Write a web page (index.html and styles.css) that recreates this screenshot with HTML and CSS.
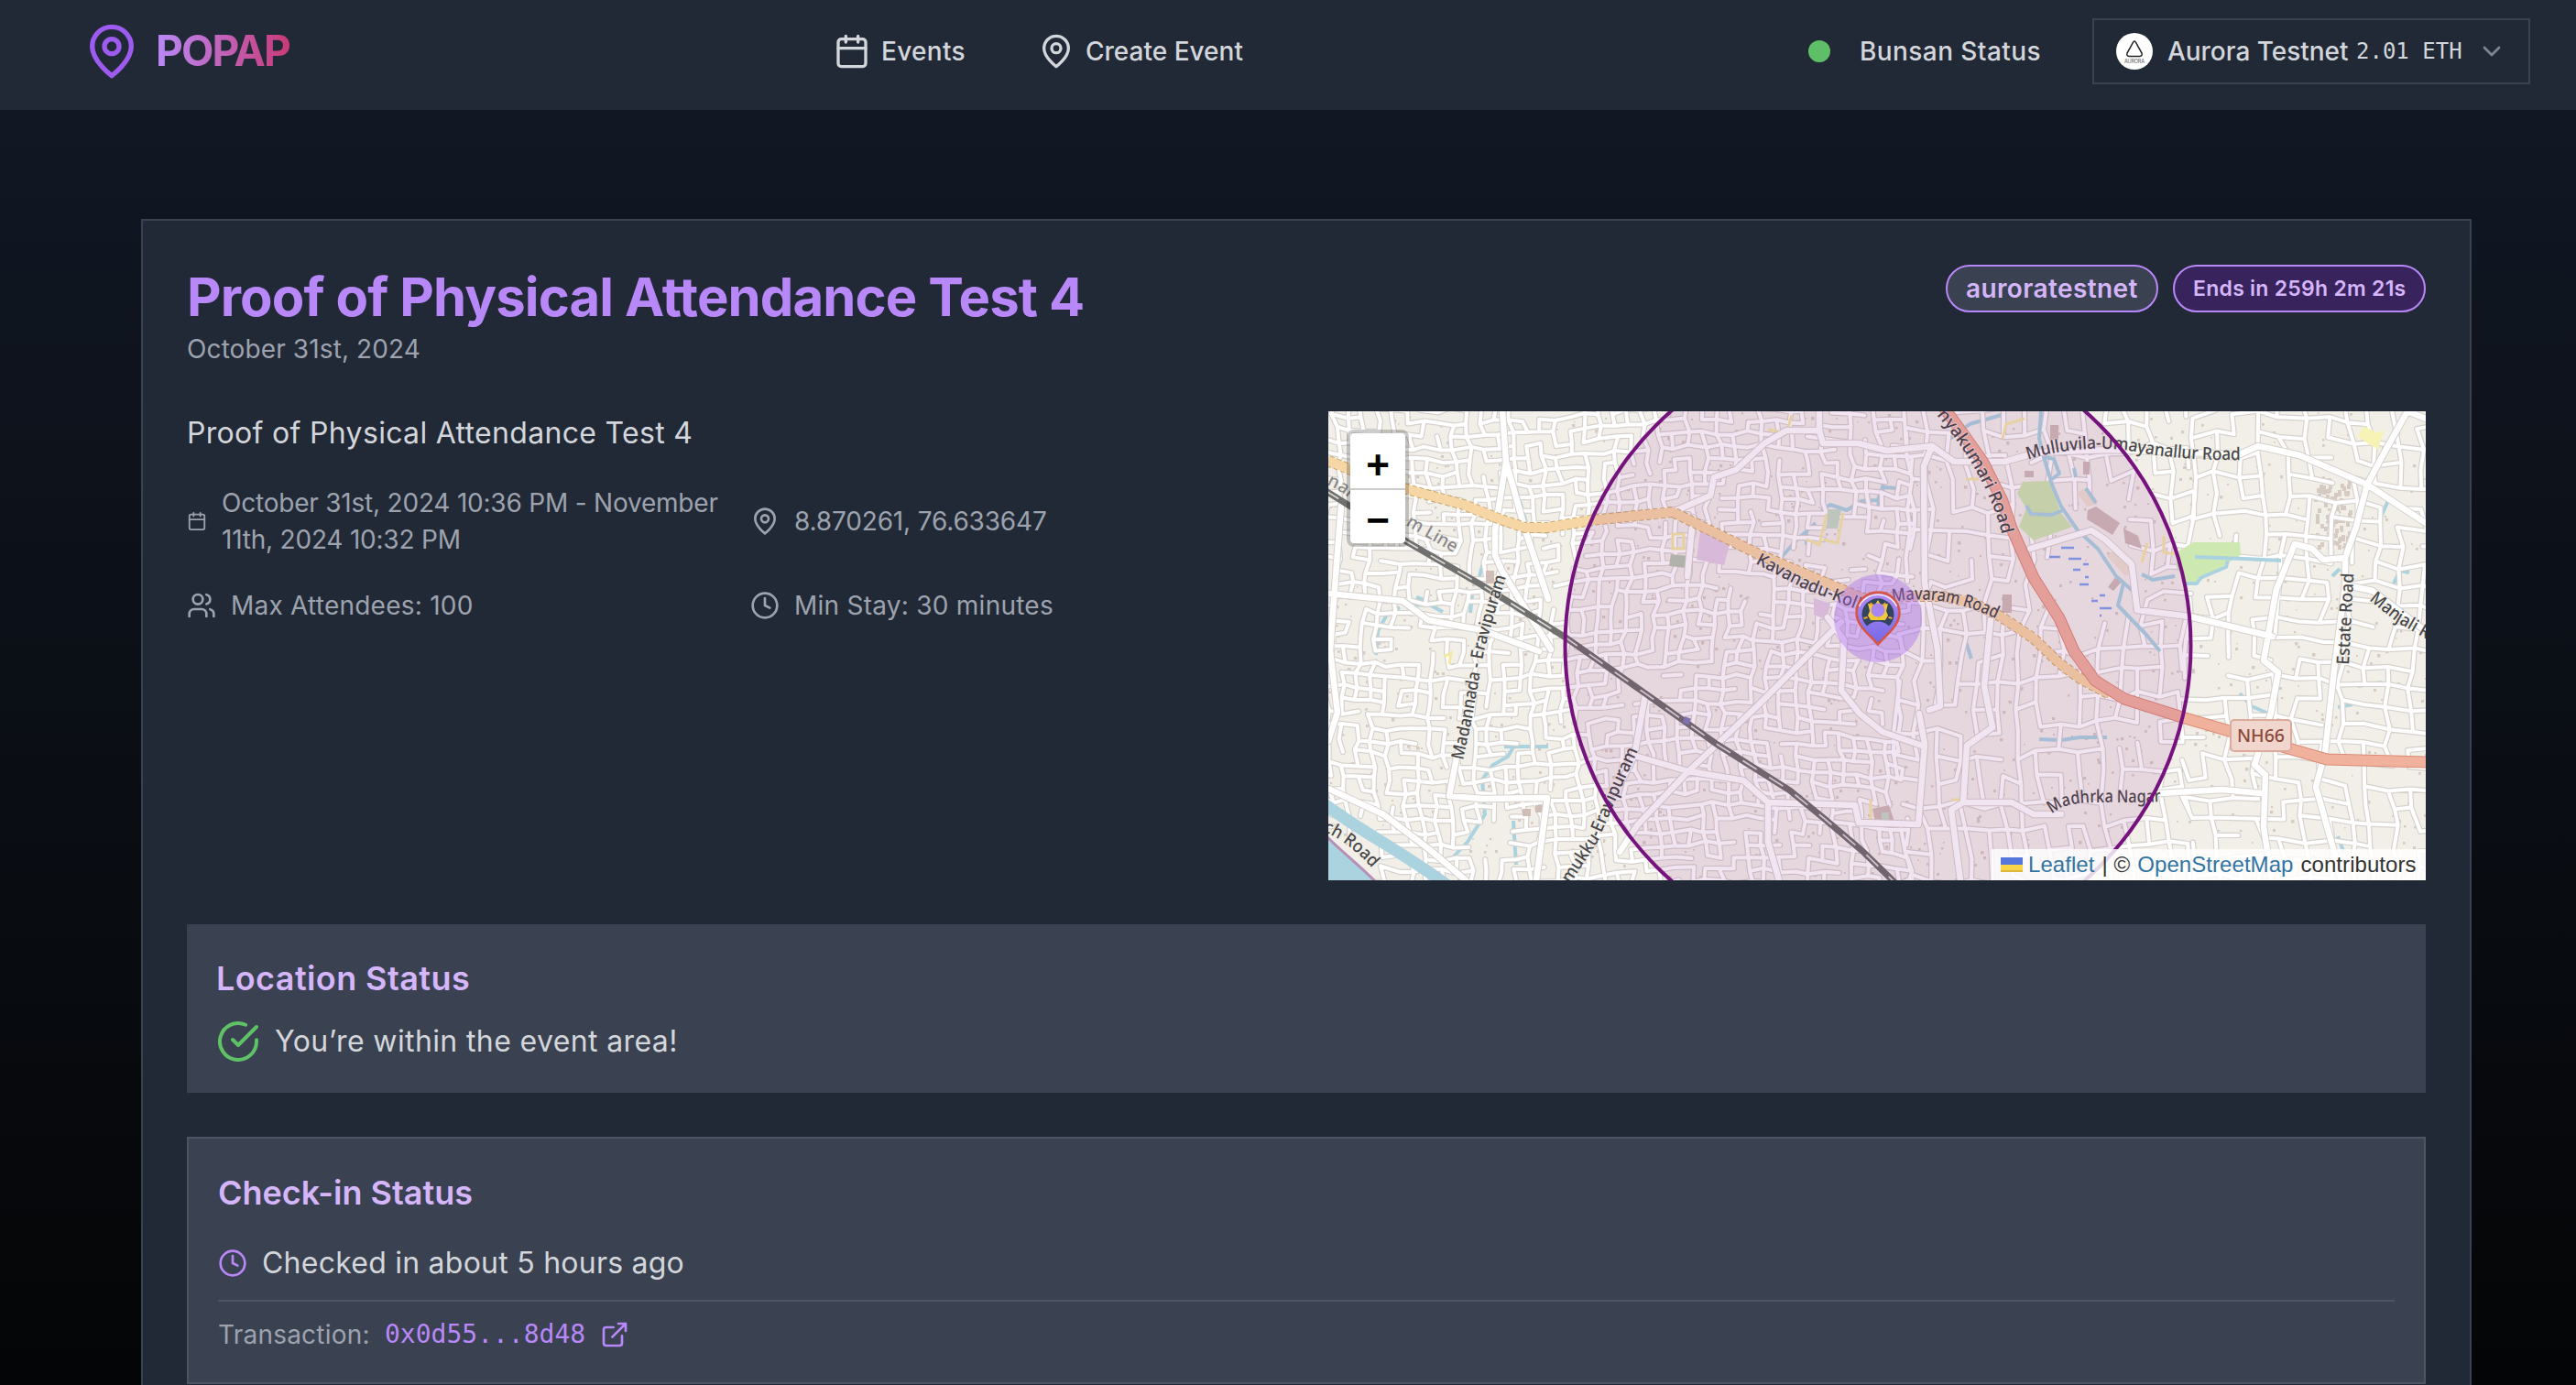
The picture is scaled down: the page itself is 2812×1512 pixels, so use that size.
FILE: index.html
```html
<!DOCTYPE html>
<html lang="en">
<head>
<meta charset="utf-8">
<title>POPAP</title>
<link rel="stylesheet" href="styles.css">
</head>
<body>
<svg class="defs" aria-hidden="true">
  <symbol id="i-pin" viewBox="0 0 24 24"><path d="M20 10c0 6-8 12-8 12s-8-6-8-12a8 8 0 0 1 16 0Z"/><circle cx="12" cy="10" r="3"/></symbol>
  <symbol id="i-cal" viewBox="0 0 24 24"><path d="M8 2v4M16 2v4M3 10h18"/><rect x="3" y="4" width="18" height="18" rx="2"/></symbol>
  <symbol id="i-clock" viewBox="0 0 24 24"><circle cx="12" cy="12" r="10"/><path d="M12 6v6l4 2"/></symbol>
  <symbol id="i-users" viewBox="0 0 24 24"><path d="M16 21v-2a4 4 0 0 0-4-4H6a4 4 0 0 0-4 4v2"/><circle cx="9" cy="7" r="4"/><path d="M22 21v-2a4 4 0 0 0-3-3.87M16 3.13a4 4 0 0 1 0 7.75"/></symbol>
  <symbol id="i-check" viewBox="0 0 24 24"><path d="M22 11.08V12a10 10 0 1 1-5.93-9.14"/><path d="m9 11 3 3L22 4"/></symbol>
  <symbol id="i-ext" viewBox="0 0 24 24"><path d="M15 3h6v6M10 14 21 3M18 13v6a2 2 0 0 1-2 2H5a2 2 0 0 1-2-2V8a2 2 0 0 1 2-2h6"/></symbol>
  <symbol id="i-down" viewBox="0 0 24 24"><path d="m6 9 6 6 6-6"/></symbol>
</svg>

<header class="topbar">
  <a class="logo"><svg class="icon logo-icon"><use href="#i-pin"/></svg><span class="logo-text">POPAP</span></a>
  <nav class="links">
    <a class="link"><svg class="icon"><use href="#i-cal"/></svg><span class="t-events">Events</span></a>
    <a class="link"><svg class="icon"><use href="#i-pin"/></svg><span class="t-create">Create Event</span></a>
  </nav>
  <div class="account">
    <span class="dot"></span>
    <span class="t-bunsan">Bunsan Status</span>
    <div class="network">
      <svg class="avatar" viewBox="0 0 40 40"><circle cx="20" cy="20" r="20" fill="#fff"/><path d="M18.3 10.6q1.700-3 3.400 0l6.200 11.200q1.300 3.400-2.200 3.600H14.300q-3.500-.2-2.200-3.600z" fill="none" stroke="#222" stroke-width="1.500"/><text x="20" y="33" text-anchor="middle" textLength="22" class="avatar-text">AURORA</text></svg>
      <span class="t-aurora">Aurora Testnet</span>
      <span class="balance">2.01 ETH</span>
      <svg class="icon chevron"><use href="#i-down"/></svg>
    </div>
  </div>
</header>

<main class="card">
  <div class="card-head">
    <div>
      <h1 class="title">Proof of Physical Attendance Test 4</h1>
      <p class="date">October 31st, 2024</p>
    </div>
    <div class="pills">
      <span class="pill pill-net">auroratestnet</span>
      <span class="pill pill-end">Ends in 259h 2m 21s</span>
    </div>
  </div>

  <div class="columns">
    <section class="details">
      <p class="desc">Proof of Physical Attendance Test 4</p>
      <div class="facts">
        <div class="fact"><svg class="icon narrow"><use href="#i-cal"/></svg><span class="f-range">October 31st, 2024 10:36 PM - November 11th, 2024 10:32 PM</span></div>
        <div class="fact"><svg class="icon"><use href="#i-pin"/></svg><span class="f-coords">8.870261, 76.633647</span></div>
        <div class="fact"><svg class="icon"><use href="#i-users"/></svg><span class="f-max">Max Attendees: 100</span></div>
        <div class="fact"><svg class="icon"><use href="#i-clock"/></svg><span class="f-min">Min Stay: 30 minutes</span></div>
      </div>
    </section>

    <section class="map">
      <svg class="tiles" viewBox="0 0 1198 512">
        <g id="ground"></g>
        <g class="water">
          <path d="M203 365L196 377 180 386 168 402 171 440 152 470 136 487 118 492"/>
          <path d="M202 447L205 495M192 366H240M203 78L216 121M88 211L112 212 125 219M96 203L110 208M52 266L54 240 64 222 78 214M155 220L157 200M165 180L170 162"/>
          <path d="M538 108L548 102 566 108 582 98 600 97 606 80M522 146V130M492 162L512 140 532 122M494 168V154"/>
          <path d="M600 103L606 83 620 84M676 32L700 14 735 4"/>
          <path d="M696 252L702 270M776 358L800 359 820 356 850 356"/>
          <path d="M995 308L1008 322 1026 330M1158 95L1146 122M1162 190L1170 174 1180 176M1124 300L1150 296M1102 323L1118 320M1102 464L1108 480"/>
        </g>
        <g id="streets"></g>
        <g class="area">
          <path fill="#cde8b0" d="M758 77L788 76 799 110 812 126 790 134 770 141 754 126 762 106 752 90ZM928 153L944 143H995L996 157 980 167 948 187H936L926 170Z"/>
          <path fill="#ede1d0" d="M817 89L826 84 840 101 828 104ZM850 158L862 148 876 176 870 180Z"/>
          <path fill="#d0bdb8" d="M829 108L838 104 864 122 856 135 828 118ZM868 128L884 136 888 150 870 144ZM851 192L860 180 866 186 857 196ZM736 200h10v20h-10ZM788 15h9v16h-9ZM824 55h7v14h-7ZM760 65h10v7h-10ZM594 434L612 430 618 448 598 452ZM212 434h9v8h-9ZM226 430h8v8h-8ZM172 174h9v14h-9Z"/>
          <path fill="#b7c8b0" d="M374 156L394 158 390 171 372 169Z"/>
          <path fill="#e2cfe4" d="M406 130L438 146 432 168 402 162ZM530 204L548 210 544 228 530 222Z"/>
          <path fill="none" stroke="#f3e9a5" stroke-width="3" d="M376 150V134H388V150ZM544 112L536 146 522 140M562 111L556 144 540 140M592 424V446M480 20L500 24 506 4M736 30L740 14 760 8M912 136V154L924 156M888 165L894 144M696 74H710M680 424H692M126 268L134 264 132 276M196 184L202 188"/>
          <path fill="#f7f3b4" d="M1130 16L1146 24 1154 20 1150 28 1146 42 1124 28Z"/>
          <path fill="#c4dcc4" d="M545 107H560L556 128H544ZM604 438h8v12h-8Z"/>
          <path stroke="#7fa3ec" stroke-width="2.500" d="M800 149h14M787 159h12M808 161h14M824 167h6M813 173h8M826 181h4M820 189h10M842 201h6M833 207h7M842 215h13M842 223h2"/>
        </g>
        <g class="water">
          <path class="fillw" d="M0 466C14 480 32 494 50 512V516H-4V462Z"/>
          <path class="river" d="M-4 429C40 462 80 480 132 519"/>
          <path d="M778 0L776 30 781 50 790 80 800 104 818 130 840 150 860 180 878 196M782 50L792 52 798 68 790 74M814 62L816 72M827 84L838 100M762 103L767 112 790 113 802 108"/>
          <path d="M868 188L862 212 893 244 908 262M888 178L900 184 924 180"/>
          <path d="M946 159L1000 161 1040 163M982 163L980 170 952 182 948 188H936M1104 172L1096 180"/>
        </g>
        <g id="majors"></g>
        <g class="rail">
          <path id="rail" d="M-4 86L85 142 168 190 259 247 346 308 425 364 504 414 543 446 583 480 618 514"/>
          <use href="#rail" class="rail-dash"/>
        </g>
        <path class="orange-case" d="M0 54L40 70 89 86 148 102 188 118 215 127H239L287 119 376 110 472 157 583 204 636 202 671 202 703 209 734 224 770 248 798 275 821 292 853 309"/>
        <path class="orange" d="M0 54L40 70 89 86 148 102 188 118 215 127H239L287 119 376 110 472 157 583 204 636 202 671 202 703 209 734 224 770 248 798 275 821 292 853 309"/>
        <path class="red-case" d="M672 -4L694 26 715 56 736 98 746 128 770 182 798 226 814 262 837 294 869 314 932 334 980 348 1055 370 1090 380 1200 383"/>
        <path class="red" d="M672 -4L694 26 715 56 736 98 746 128 770 182 798 226 814 262 837 294 869 314 932 334 980 348 1055 370 1090 380 1200 383"/>
        <rect x="388" y="334" width="7" height="7" fill="#7e80b8" transform="rotate(20 391 337)"/>
        <g class="labels">
          <path id="l1" d="M147 381L156 340 170 262 180 226 196 174"/>
          <path id="l2" d="M264 516L294 470 320 410 342 362"/>
          <path id="l3" d="M466 166L520 194 584 219"/>
          <path id="l4" d="M616 208C660 200 700 212 732 228"/>
          <path id="l5" d="M664 4C690 34 712 70 724 100Q732 118 736 138"/>
          <path id="l6" d="M764 53C800 40 850 38 880 44S950 54 998 53"/>
          <path id="l9" d="M1136 206L1166 230 1208 254"/>
          <path id="l10" d="M-2 80Q14 86 28 100"/>
          <path id="l11" d="M84 124L140 156"/>
          <path id="l12" d="M-6 458Q26 472 52 504"/>
          <path id="l13" d="M790 440C810 420 850 430 912 426"/>
          <text><textPath href="#l1" textLength="206" lengthAdjust="spacingAndGlyphs">Madannada - Eravipuram</textPath></text>
          <text><textPath href="#l2" textLength="164" lengthAdjust="spacingAndGlyphs">mukku-Eravipuram</textPath></text>
          <text><textPath href="#l3" textLength="124" lengthAdjust="spacingAndGlyphs">Kavanadu-Koll</textPath></text>
          <text><textPath href="#l4" textLength="116" lengthAdjust="spacingAndGlyphs">Mavaram Road</textPath></text>
          <text><textPath href="#l5" textLength="150" lengthAdjust="spacingAndGlyphs">nyakumari Road</textPath></text>
          <text><textPath href="#l6" textLength="234" lengthAdjust="spacingAndGlyphs">Mulluvila-Umayanallur Road</textPath></text>
          <text transform="translate(1114 277) rotate(-87)" textLength="100" lengthAdjust="spacingAndGlyphs">Estate Road</text>
          <text><textPath href="#l9" textLength="76" lengthAdjust="spacingAndGlyphs">Manjali R</textPath></text>
          <text class="faint"><textPath href="#l10">nai</textPath></text>
          <text class="faint"><textPath href="#l11">m Line</textPath></text>
          <text><textPath href="#l12" textLength="68" lengthAdjust="spacingAndGlyphs">ch Road</textPath></text>
          <text><textPath href="#l13" textLength="122" lengthAdjust="spacingAndGlyphs">Madhrka Nagar</textPath></text>
          <rect x="985" y="337" width="66" height="34" rx="4" fill="#f1d6cd" stroke="#dcaa9b" stroke-width="2"/>
          <text x="1018" y="361" text-anchor="middle" class="shield" textLength="52" lengthAdjust="spacingAndGlyphs">NH66</text>
        </g>
        <circle class="fence" cx="600" cy="256" r="341.500"/>
        <circle cx="600" cy="226" r="48" fill="#a463f0" fill-opacity=".38"/>
        <defs><linearGradient id="pg" x1="0" y1="0" x2="0" y2="1"><stop offset="0" stop-color="#b28cf3"/><stop offset="1" stop-color="#7468e8"/></linearGradient></defs>
        <path d="M600 254.500C590 243 576.500 234 576.500 220A23.500 22.500 0 0 1 623.500 220C623.500 234 610 243 600 254.500Z" fill="url(#pg)" stroke="#d9533f" stroke-width="2.500"/>
        <path d="M579.500 213A22 20 0 0 1 620.500 213" fill="none" stroke="#f1e8f8" stroke-width="1.500"/>
        <path d="M588 234.500A17.500 17.500 0 1 1 612 234.500A17 17 0 0 0 588 234.500Z" fill="#33455c"/>
        <path d="M600 206l3 5 8-1-2 8 2 5-3 5Q600 228 592 228l-3-5 2-5-2-8 8 1Z" fill="#f2c93a"/>
        <path d="M584.500 226l4-1M611.500 225l4 1M592 209l2 3M608 209l-2 3" stroke="#f0a13a" stroke-width="2"/>
        <circle cx="600" cy="217" r="7.500" fill="#a887f2"/>
      </svg>
      <div class="zoom"><a>+</a><a>−</a></div>
      <div class="attribution"><svg class="flag" viewBox="0 0 12 8"><path fill="#5577dc" d="M0 0h12v4H0z"/><path fill="#f8d648" d="M0 4h12v3H0z"/><path fill="#dcb93c" d="M0 7h12v1H0z"/></svg><a>Leaflet</a><span>| ©</span><a>OpenStreetMap</a><span>contributors</span></div>
    </section>
  </div>

  <section class="panel">
    <h2 class="h-loc">Location Status</h2>
    <p class="line"><svg class="icon check"><use href="#i-check"/></svg><span class="t-within">You’re within the event area!</span></p>
  </section>

  <section class="panel bordered">
    <h2 class="h-check">Check-in Status</h2>
    <p class="line"><svg class="icon clock"><use href="#i-clock"/></svg><span class="t-checked">Checked in about 5 hours ago</span></p>
    <div class="tx"><span class="tx-label">Transaction:</span><a class="hash">0x0d55...8d48</a><svg class="icon ext"><use href="#i-ext"/></svg></div>
  </section>
</main>
<script src="map.js"></script>
</body>
</html>
```

FILE: styles.css
```css
* { box-sizing: border-box; margin: 0; padding: 0; }
html, body { height: 1512px; }
body { display: flex; flex-direction: column; background: linear-gradient(#121926, #040506); font-family: "Inter", "Open Sans", sans-serif; font-size: 28px; line-height: 40px; color: #d3d6db; }
.defs { display: none; }
.icon { display: block; flex: none; width: 32px; height: 32px; fill: none; stroke: currentColor; stroke-width: 2; stroke-linecap: round; stroke-linejoin: round; }
span, a { white-space: nowrap; }

.topbar { display: grid; grid-template-columns: 820px 1fr auto; align-items: center; flex: none; height: 120px; padding: 0 50px 8px 90px; background: #222936; font-weight: 500; }
.logo { display: flex; align-items: center; gap: 16px; }
.logo-icon { width: 64px; height: 64px; color: #9d5bef; }
.logo-text { font-size: 46px; font-weight: 700; line-height: 60px; letter-spacing: -1.9px; margin-top: -2px; background: linear-gradient(90deg, #b98af8, #c93a78); -webkit-background-clip: text; background-clip: text; color: transparent; }
.links { display: flex; gap: 79px; }
.link { display: flex; align-items: center; gap: 12px; }
.link .icon { width: 40px; height: 40px; }
.t-events { letter-spacing: .32px; }
.t-create { letter-spacing: 0; }
.account { display: flex; align-items: center; }
.dot { width: 24px; height: 24px; border-radius: 50%; background: #5fbf68; margin-right: 32px; }
.t-bunsan { width: 198px; letter-spacing: .42px; margin-right: 56px; }
.network { display: flex; align-items: center; width: 478px; height: 72px; padding: 0 24px; border: 2px solid #3c4350; }
.avatar { width: 40px; height: 40px; margin-right: 16px; }
.avatar-text { font: 5.5px "Inter", sans-serif; fill: #555; }
.t-aurora { width: 198px; letter-spacing: -.04px; margin-right: 8px; }
.balance { width: 116px; margin-right: 16px; font: 400 24px/40px "DejaVu Sans Mono", monospace; }
.chevron { color: #808691; }

.card { flex: 1; width: 2544px; margin: 119px 0 0 154px; padding: 48px 48px 1px; border: 2px solid #3a4150; border-bottom: 0; background: #222936; }
.card-head { display: flex; justify-content: space-between; }
.title { font-size: 58px; line-height: 70px; padding-bottom: 2px; font-weight: 700; letter-spacing: -.88px; color: #b988f8; }
.date { color: #9da3ae; letter-spacing: .11px; }
.pills { display: flex; gap: 16px; align-items: flex-start; }
.pill { height: 52px; padding: 0 20px; border: 2px solid #b988f8; border-radius: 26px; line-height: 48px; font-weight: 600; color: #d5b6fb; }
.pill-net { width: 232px; background: #3a4150; letter-spacing: .38px; }
.pill-end { width: 276px; background: #39235c; font-size: 23px; letter-spacing: .26px; }

.columns { display: grid; grid-template-columns: 1fr 1fr; gap: 48px; margin-top: 48px; }
.desc { font-size: 32px; line-height: 48px; letter-spacing: .32px; }
.facts { display: grid; grid-template-columns: 1fr 1fr; gap: 32px; margin-top: 32px; color: #9da3ae; }
.fact { display: flex; align-items: center; gap: 16px; }
.fact .narrow { width: 22px; }
.f-range { white-space: normal; letter-spacing: -.21px; }
.f-coords { letter-spacing: -.16px; }
.f-max { letter-spacing: .23px; }
.f-min { letter-spacing: .25px; }

.map { position: relative; height: 512px; overflow: hidden; background: #f2efe9; }
.tiles { display: block; width: 1198px; height: 512px; }
.case { fill: none; stroke: #d6d1cc; stroke-linejoin: round; stroke-linecap: round; }
.core { fill: none; stroke: #fff; stroke-linejoin: round; stroke-linecap: round; }
.speck { fill: #d6cbc3; }
.water { fill: none; stroke: #aad3df; stroke-width: 4; stroke-linejoin: round; }
.fillw { fill: #aad3df; stroke: #b58fb5; stroke-width: 3; }
.river { stroke-width: 13; }
.rail { fill: none; stroke: #70706e; stroke-width: 7; }
.rail-dash { stroke: #d8d6d2; stroke-width: 1.8; stroke-dasharray: 18 16; }
.orange-case { fill: none; stroke: #cda661; stroke-width: 12; stroke-linejoin: round; stroke-dasharray: 5 3; }
.orange { fill: none; stroke: #f7d6a5; stroke-width: 10; stroke-linejoin: round; }
.red-case { fill: none; stroke: #db8a75; stroke-width: 13; stroke-linejoin: round; }
.red { fill: none; stroke: #f0b29d; stroke-width: 11; stroke-linejoin: round; }
.labels path { fill: none; }
.labels text { font: 500 19px "Noto Sans", sans-serif; fill: #484848; stroke: #f2efe9; stroke-opacity: .6; stroke-width: 2px; paint-order: stroke; }
.labels .faint { fill: #888; }
.labels .shield { fill: #8d4a3a; font-size: 20px; stroke: none; }
.fence { fill: #800080; fill-opacity: .1; stroke: #75127d; stroke-width: 4; }
.zoom { position: absolute; left: 20px; top: 20px; width: 68px; border: 4px solid rgba(0, 0, 0, .2); border-radius: 8px; background: #fff; background-clip: padding-box; }
.zoom a { display: block; height: 60px; font: 700 44px/69px "Liberation Sans", sans-serif; text-align: center; color: #000; }
.zoom a + a { border-top: 2px solid #ccc; line-height: 65px; }
.attribution { position: absolute; right: 0; bottom: 0; display: flex; align-items: center; width: 474px; height: 34px; padding: 0 10px; background: rgba(255, 255, 255, .82); font: 24px/34px "Liberation Sans", sans-serif; letter-spacing: .06px; color: #333; gap: 8px; }
.attribution a { color: #3274a3; }
.flag { width: 24px; height: 16px; margin-right: -2px; }

.panel { margin-top: 48px; height: 184px; padding: 32px; background: #3a4150; }
.panel h2 { font-size: 36px; line-height: 54px; padding-bottom: 2px; font-weight: 600; color: #d5b6fb; }
.h-loc { letter-spacing: .41px; }
.h-check { letter-spacing: -.01px; }
.line { display: flex; align-items: center; gap: 16px; margin-top: 16px; font-size: 32px; line-height: 48px; }
.check { width: 48px; height: 48px; color: #5fc266; }
.clock { color: #b988f8; }
.t-within { letter-spacing: .38px; }
.t-checked { letter-spacing: .24px; }
.bordered { height: 270px; border: 2px solid #4d5462; }
.bordered .line { margin-top: 24px; }
.tx { display: flex; align-items: center; margin-top: 16px; padding-top: 16px; border-top: 2px solid #4d5462; }
.tx-label { width: 166px; margin-right: 16px; letter-spacing: .22px; color: #9da3ae; }
.hash { font: 400 28px/40px "DejaVu Sans Mono", monospace; color: #b988f8; width: 219px; margin-right: 16px; }
.ext { color: #b988f8; }
```

FILE: map.js
```javascript
// Draws the street network of the map: a seeded mesh of lanes plus the named main streets.
let seed = 41;
const rnd = () => { seed = (seed * 1664525 + 1013904223) % 4294967296; return seed / 4294967296; };
const node = (tag, attrs) => {
  const n = document.createElementNS('http://www.w3.org/2000/svg', tag);
  for (const k in attrs) n.setAttribute(k, attrs[k]);
  return n;
};
const road = (parent, d, w, edge) => {
  parent.append(node('path', { class: 'case', d, 'stroke-width': w + edge }));
  parent.append(node('path', { class: 'core', d, 'stroke-width': w }));
};

// open land where no lanes are drawn: [x, y, radius x, radius y]
const open = [[830, 190, 58, 54], [560, 150, 28, 30], [95, 255, 24, 14], [785, 105, 32, 34], [960, 165, 32, 22], [610, 440, 26, 14], [175, 470, 30, 24], [20, 490, 40, 24], [800, 320, 22, 20], [850, 120, 34, 20], [960, 285, 24, 20], [340, 300, 20, 16]];
const isOpen = (x, y) => open.some(([cx, cy, rx, ry]) => ((x - cx) / rx) ** 2 + ((y - cy) / ry) ** 2 < 1);

function mesh(x0, x1, sx, sy, skip) {
  const cols = Math.ceil((x1 - x0) / sx), rows = Math.ceil(540 / sy), pts = [];
  for (let r = 0; r <= rows; r++) {
    pts.push([]);
    for (let c = 0; c <= cols; c++) {
      const x = x0 + c * sx + (rnd() - .5) * sx * .4, y = -10 + r * sy + (rnd() - .5) * sy * .4;
      pts[r].push([x + Math.sin(y / 70) * 8, y + Math.sin(x / 90) * 9]);
    }
  }
  let d = '';
  const link = (a, b) => {
    const mx = (a[0] + b[0]) / 2, my = (a[1] + b[1]) / 2;
    if (rnd() < skip || isOpen(mx, my)) return;
    d += `M${a[0].toFixed(1)} ${a[1].toFixed(1)}L${b[0].toFixed(1)} ${b[1].toFixed(1)}`;
  };
  for (let r = 0; r <= rows; r++) for (let c = 0; c <= cols; c++) {
    if (c < cols) link(pts[r][c], pts[r][c + 1]);
    if (r < rows) link(pts[r][c], pts[r + 1][c]);
  }
  return d;
}

const streets = document.getElementById('streets');
road(streets, mesh(-10, 620, 16, 14, .3) + mesh(628, 930, 22, 27, .28) + mesh(938, 1210, 25, 22, .24), 4, 2.4);

const ground = document.getElementById('ground');
let specks = '';
for (let i = 0; i < 1300; i++) {
  const s = (1.5 + rnd() * 2).toFixed(1);
  specks += `M${(rnd() * 1198).toFixed(0)} ${(rnd() * 512).toFixed(0)}h${s}v${s}h-${s}z`;
}
// the dense block of houses beside Estate Road
for (let i = 0; i < 90; i++) specks += `M${(1076 + rnd() * 40).toFixed(0)} ${(70 + rnd() * 80).toFixed(0)}h4v5h-4z`;
ground.append(node('path', { class: 'speck', d: specks }));

const mains = [
  'M0 199L81 207 96 218 109 228 168 239 230 262', 'M14 103L8 180 2 261 10 329 0 360',
  'M190 0L194 55 182 130 182 157 190 175 243 260', 'M194 55L215 130 240 205',
  'M140 378L132 420 168 423 239 422 227 512', 'M0 412L60 440 110 478 150 512',
  'M376 110L417 92 421 72 445 64 476 35 500 21 536 21V0M536 21L540 35 579 35 610 43 659 38 683 55 738 55 774 45 853 42 995 47 1015 38 1060 48 1134 80 1198 122',
  'M398 116L392 180', 'M1178 0L1150 50 1134 80 1122 126 1110 160 1086 162 1074 150 1055 145 1035 194 1021 272 1037 285 1029 329 1011 386 1023 397 1021 454 1030 512',
  'M1110 160V190L1098 282 1088 373 1078 410 1098 481 1106 512', 'M1112 190L1140 196 1198 240', 'M1178 0L1198 8',
  'M766 150L833 130 848 140 877 167 883 217 940 224 1031 246', 'M908 417L976 413 1019 417',
  'M334 376L393 393 453 403 480 427 575 430 579 449 644 451 651 363 645 330',
  'M393 393L338 451 318 481M393 393L425 363 468 322 560 230', 'M480 427V470L492 512', 'M346 310L334 376 322 400',
  'M651 187L665 260 668 322 656 326M723 228L716 300 725 345 697 365 693 427H746L770 440 800 440M693 427L680 435 690 512',
  'M545 225L563 250 560 305 580 330 605 350 651 366', 'M659 38L650 60 651 187'
];
road(document.getElementById('majors'), mains.join(''), 6.5, 2);
```
